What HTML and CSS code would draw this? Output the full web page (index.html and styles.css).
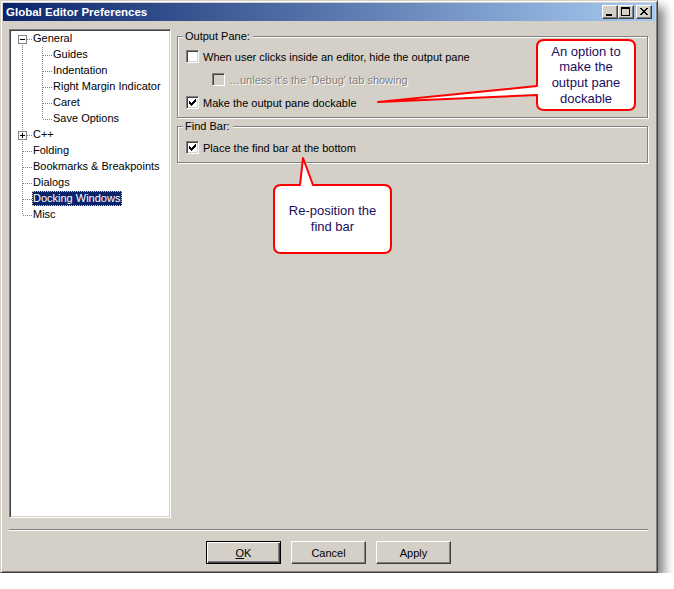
FILE: index.html
```html
<!DOCTYPE html>
<html lang="en">
<head>
  <meta charset="UTF-8">
  <title>Global Editor Preferences</title>
  <link rel="stylesheet" href="styles.css">
</head>
<body>
  <div class="window">
    <!-- Title bar -->
    <div class="titlebar">
      <span class="title">Global Editor Preferences</span>
      <div class="caption-buttons">
        <button class="cap-btn"><svg width="14" height="12" shape-rendering="crispEdges"><path d="M3 8h6v2h-6z"/></svg></button>
        <button class="cap-btn"><svg width="14" height="12" shape-rendering="crispEdges"><path fill-rule="evenodd" d="M2 1h9v9h-9z M3 3h7v6h-7z"/></svg></button>
        <button class="cap-btn close"><svg width="14" height="12" shape-rendering="crispEdges"><path d="M3 2h2v1h-2z M9 2h2v1h-2z M4 3h2v1h-2z M8 3h2v1h-2z M5 4h4v1h-4z M6 5h2v1h-2z M5 6h4v1h-4z M4 7h2v1h-2z M8 7h2v1h-2z M3 8h2v1h-2z M9 8h2v1h-2z"/></svg></button>
      </div>
    </div>

    <!-- Tree + option panes -->
    <div class="main">
      <div class="tree">
        <div class="node"><span class="twig first"><span class="expander"><svg width="9" height="9" shape-rendering="crispEdges"><rect x="0.5" y="0.5" width="8" height="8" fill="#fff" stroke="#808080"/><path d="M2 4h5v1h-5z"/></svg></span></span><span class="label">General</span></div>
        <div class="node"><span class="twig pipe"></span><span class="twig tee"></span><span class="label">Guides</span></div>
        <div class="node"><span class="twig pipe"></span><span class="twig tee"></span><span class="label">Indentation</span></div>
        <div class="node"><span class="twig pipe"></span><span class="twig tee"></span><span class="label">Right Margin Indicator</span></div>
        <div class="node"><span class="twig pipe"></span><span class="twig tee"></span><span class="label">Caret</span></div>
        <div class="node"><span class="twig pipe"></span><span class="twig end"></span><span class="label">Save Options</span></div>
        <div class="node"><span class="twig tee"><span class="expander"><svg width="9" height="9" shape-rendering="crispEdges"><rect x="0.5" y="0.5" width="8" height="8" fill="#fff" stroke="#808080"/><path d="M2 4h5v1h-5z M4 2h1v5h-1z"/></svg></span></span><span class="label">C++</span></div>
        <div class="node"><span class="twig tee"></span><span class="label">Folding</span></div>
        <div class="node"><span class="twig tee"></span><span class="label">Bookmarks &amp; Breakpoints</span></div>
        <div class="node"><span class="twig tee"></span><span class="label">Dialogs</span></div>
        <div class="node"><span class="twig tee"></span><span class="label selected">Docking Windows</span></div>
        <div class="node"><span class="twig end"></span><span class="label">Misc</span></div>
      </div>

      <div class="panes">
        <div class="group output-group">
          <span class="group-title">Output Pane:</span>
          <div class="check-row">
            <span class="checkbox"></span>
            <span>When user clicks inside an editor, hide the output pane</span>
          </div>
          <div class="check-row sub disabled">
            <span class="checkbox"></span>
            <span>…unless it's the 'Debug' tab showing</span>
          </div>
          <div class="check-row">
            <span class="checkbox"><svg width="11" height="11" shape-rendering="crispEdges"><path d="M8 2h1v1h-1z M7 3h2v1h-2z M2 4h1v1h-1z M6 4h3v1h-3z M2 5h2v1h-2z M5 5h3v1h-3z M2 6h5v1h-5z M3 7h3v1h-3z M4 8h1v1h-1z"/></svg></span>
            <span>Make the output pane dockable</span>
          </div>
        </div>

        <div class="group find-group">
          <span class="group-title">Find Bar:</span>
          <div class="check-row">
            <span class="checkbox"><svg width="11" height="11" shape-rendering="crispEdges"><path d="M8 2h1v1h-1z M7 3h2v1h-2z M2 4h1v1h-1z M6 4h3v1h-3z M2 5h2v1h-2z M5 5h3v1h-3z M2 6h5v1h-5z M3 7h3v1h-3z M4 8h1v1h-1z"/></svg></span>
            <span>Place the find bar at the bottom</span>
          </div>
        </div>
      </div>
    </div>

    <!-- Dialog buttons -->
    <div class="footer">
      <div class="separator"></div>
      <div class="buttons">
        <button class="btn default"><u>O</u>K</button>
        <button class="btn">Cancel</button>
        <button class="btn">Apply</button>
      </div>
    </div>

    <!-- Annotation callouts -->
    <svg class="callouts" width="658" height="573">
      <path d="M544 40 H628 Q635 40 635 47 V103 Q635 110 628 110 H544 Q537 110 537 103 V95 L378 102 L537 86 V47 Q537 40 544 40 Z"/>
      <path d="M281 185 H300 L303 158 L313 185 H384 Q391 185 391 192 V246 Q391 253 384 253 H281 Q274 253 274 246 V192 Q274 185 281 185 Z"/>
    </svg>
    <div class="callout-text callout-dock">An option to<br>make the<br>output pane<br>dockable</div>
    <div class="callout-text callout-find">Re-position the<br>find bar</div>
  </div>
</body>
</html>
```

FILE: styles.css
```css
/* General Reset */
* {
  margin: 0;
  padding: 0;
  box-sizing: border-box;
}

body {
  font-family: "Liberation Sans", Arial, sans-serif;
  font-size: 11px;
  color: #000000;
  background-color: #FFFFFF;
}

/* Dialog window */
.window {
  position: relative;
  width: 658px;
  height: 573px;
  padding: 2px;
  background-color: #D4D0C8;
  border: 1px solid;
  border-color: #D4D0C8 #404040 #404040 #D4D0C8;
  box-shadow: inset 1px 1px 0 #FFFFFF, inset -1px -1px 0 #808080, 6px 7px 10px rgba(0, 0, 0, 0.5);
}

/* Title bar */
.titlebar {
  height: 18px;
  display: flex;
  align-items: center;
  padding: 0 3px 0 3px;
  background: linear-gradient(to right, #0A246A, #A6CAF0);
}

.title {
  color: #FFFFFF;
  font-weight: bold;
  font-size: 11.5px;
}

.caption-buttons {
  margin-left: auto;
  display: flex;
}

.cap-btn {
  width: 16px;
  height: 14px;
  display: flex;
  background-color: #D4D0C8;
  border: 1px solid;
  border-color: #FFFFFF #404040 #404040 #FFFFFF;
  box-shadow: inset -1px -1px 0 #808080;
}

.cap-btn.close {
  margin-left: 2px;
}

/* Main area */
.main {
  display: flex;
  padding: 8px 7px 0 6px;
}

/* Tree view */
.tree {
  width: 162px;
  height: 489px;
  flex: none;
  padding: 1px 0 0 2px;
  background-color: #FFFFFF;
  border: 1px solid;
  border-color: #808080 #FFFFFF #FFFFFF #808080;
  box-shadow: inset 1px 1px 0 #404040, inset -1px -1px 0 #D4D0C8;
}

.node {
  height: 16px;
  display: flex;
  align-items: flex-start;
}

.twig {
  width: 20px;
  height: 16px;
  flex: none;
  background-repeat: no-repeat;
  background-image:
    repeating-linear-gradient(to bottom, #808080 0 1px, transparent 1px 2px),
    repeating-linear-gradient(to right, #808080 0 1px, transparent 1px 2px);
  background-position: 10px 0, 11px 8px;
  background-size: 1px 16px, 9px 1px;
}

.twig.pipe {
  background-size: 1px 16px, 0 0;
}

.twig.end {
  background-size: 1px 8px, 9px 1px;
}

.twig.first {
  background-position: 10px 8px, 11px 8px;
  background-size: 1px 8px, 9px 1px;
}

.expander {
  display: block;
  margin: 4px 0 0 6px;
  width: 9px;
  height: 9px;
}

.expander svg {
  display: block;
}

.label {
  height: 15px;
  line-height: 15px;
  padding: 0 2px 0 1px;
  white-space: nowrap;
}

.label.selected {
  background-color: #0A246A;
  color: #FFFFFF;
  outline: 1px dotted #E8C88C;
  outline-offset: -1px;
}

/* Option groups */
.panes {
  flex: 1;
  margin-left: 6px;
  padding-top: 7px;
}

.group {
  position: relative;
  border: 1px solid #808080;
  box-shadow: inset 1px 1px 0 #FFFFFF, 1px 1px 0 #FFFFFF;
  padding: 8px 8px 3px 8px;
}

.find-group {
  margin-top: 8px;
  padding-top: 9px;
}

.group-title {
  position: absolute;
  top: -7px;
  left: 5px;
  line-height: 13px;
  padding: 0 3px 0 2px;
  background-color: #D4D0C8;
}

.check-row {
  height: 23px;
  display: flex;
  align-items: center;
  gap: 4px;
  white-space: nowrap;
}

.check-row.sub {
  padding-left: 26px;
}

.check-row.disabled {
  color: #808080;
  text-shadow: 1px 1px 0 #FFFFFF;
}

.checkbox {
  width: 13px;
  height: 13px;
  flex: none;
  background-color: #FFFFFF;
  border: 1px solid;
  border-color: #808080 #FFFFFF #FFFFFF #808080;
  box-shadow: inset 1px 1px 0 #404040, inset -1px -1px 0 #D4D0C8;
}

.checkbox svg {
  display: block;
}

.disabled .checkbox {
  background-color: #D4D0C8;
}

/* Footer */
.footer {
  padding: 0 7px 0 6px;
}

.separator {
  margin-top: 11px;
  border-top: 1px solid #808080;
  border-bottom: 1px solid #FFFFFF;
}

.buttons {
  display: flex;
  justify-content: center;
  gap: 10px;
  margin-top: 10px;
}

.btn {
  width: 75px;
  height: 23px;
  font: inherit;
  color: #000000;
  background-color: #D4D0C8;
  border: 1px solid;
  border-color: #FFFFFF #404040 #404040 #FFFFFF;
  box-shadow: inset -1px -1px 0 #808080;
}

.btn.default {
  border-color: #000000;
  box-shadow: inset 1px 1px 0 #FFFFFF, inset -1px -1px 0 #404040, inset -2px -2px 0 #808080;
}

/* Callouts drawn over the dialog */
.callouts {
  position: absolute;
  left: -1px;
  top: -1px;
  pointer-events: none;
}

.callouts path {
  fill: #FFFFFF;
  stroke: #FF0000;
  stroke-width: 2;
  stroke-linejoin: round;
}

.callout-text {
  position: absolute;
  display: flex;
  align-items: center;
  justify-content: center;
  text-align: center;
  font-size: 13px;
  line-height: 15.7px;
  color: #1A0E5E;
}

.callout-dock {
  left: 536px;
  top: 39px;
  width: 98px;
  height: 70px;
}

.callout-find {
  left: 273px;
  top: 184px;
  width: 117px;
  height: 68px;
}
```
